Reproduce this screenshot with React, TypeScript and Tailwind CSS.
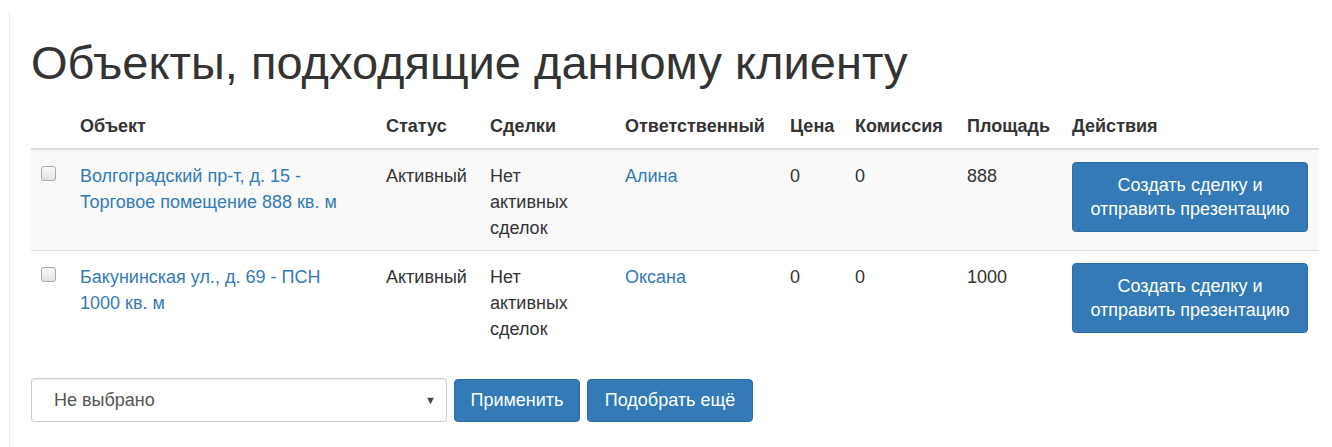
import React from "react";

const rows = [
  {
    obj: "Волгоградский пр-т, д. 15 - Торговое помещение 888 кв. м",
    status: "Активный",
    resp: "Алина",
    area: "888",
    striped: true,
  },
  {
    obj: "Бакунинская ул., д. 69 - ПСН 1000 кв. м",
    status: "Активный",
    resp: "Оксана",
    area: "1000",
    striped: false,
  },
];

export default function App() {
  return (
    <div
      className="w-[1332px] h-[447px] bg-white overflow-hidden text-[#333]"
      style={{ fontFamily: '"Liberation Sans", Arial, sans-serif' }}
    >
      <div className="ml-[9px] mt-[11px] h-[436px] border-l border-[#eef0f0] pl-[21px] pr-[14px]">
        <h1 className="text-[47px] leading-[56px] font-normal text-[#333] pt-[24px] mb-[18px]">
          Объекты, подходящие данному клиенту
        </h1>
        <table className="w-[1288px] table-fixed border-collapse text-[18px] leading-[26px]">
          <colgroup>
            <col className="w-[39px]" />
            <col className="w-[306px]" />
            <col className="w-[104px]" />
            <col className="w-[135px]" />
            <col className="w-[165px]" />
            <col className="w-[65px]" />
            <col className="w-[112px]" />
            <col className="w-[105px]" />
            <col className="w-[257px]" />
          </colgroup>
          <thead>
            <tr className="border-b-2 border-[#ddd] text-left text-[18px]">
              <th className="px-[10px] pt-[4px] pb-[9px]"></th>
              {["Объект", "Статус", "Сделки", "Ответственный", "Цена", "Комиссия", "Площадь", "Действия"].map(
                (h) => (
                  <th key={h} className="pl-[10px] pr-0 pt-[4px] pb-[9px] font-bold whitespace-nowrap">
                    {h}
                  </th>
                )
              )}
            </tr>
          </thead>
          <tbody>
            {rows.map((r, i) => (
              <tr
                key={i}
                className={
                  (r.striped ? "bg-[#f9f9f9] " : "") +
                  (i < rows.length - 1 ? "border-b border-[#ddd] " : "") +
                  "align-top"
                }
              >
                <td className="px-[10px] pt-[13px] pb-[9px]">
                  <div className="mt-[3px] w-[15px] h-[15px] rounded-[3px] border border-[#a9a9a9] bg-gradient-to-b from-[#fafafa] to-[#e2e2e2]" />
                </td>
                <td className="pl-[10px] pr-[16px] pt-[13px] pb-[9px] text-[#337ab7]">{r.obj}</td>
                <td className="pl-[10px] pr-0 pt-[13px] pb-[9px] whitespace-nowrap">{r.status}</td>
                <td className="px-[10px] pt-[13px] pb-[9px]">
                  Нет
                  <br />
                  активных
                  <br />
                  сделок
                </td>
                <td className="px-[10px] pt-[13px] pb-[9px] text-[#337ab7]">{r.resp}</td>
                <td className="px-[10px] pt-[13px] pb-[9px]">0</td>
                <td className="px-[10px] pt-[13px] pb-[9px]">0</td>
                <td className="px-[10px] pt-[13px] pb-[9px]">{r.area}</td>
                <td className="px-[10px] pt-[13px] pb-[9px]">
                  <button className="-mt-[1px] block w-[236px] h-[70px] rounded-[4px] bg-[#337ab7] border border-[#2e6da4] text-white text-[18px] leading-[24px]">
                    Создать сделку и
                    <br />
                    отправить презентацию
                  </button>
                </td>
              </tr>
            ))}
          </tbody>
        </table>
        <div className="flex items-center gap-[7px] mt-[27px]">
          <div className="relative w-[416px] h-[44px] rounded-[4px] border border-[#ccc] bg-white flex items-center pl-[22px] text-[18px] text-[#555] shadow-[inset_0_1px_1px_rgba(0,0,0,0.075)]">
            Не выбрано
            <span className="absolute right-[10px] top-[13px] text-[11px] text-[#444]">▼</span>
          </div>
          <button className="h-[43px] w-[126px] rounded-[4px] bg-[#337ab7] border border-[#2e6da4] text-white text-[18px]">
            Применить
          </button>
          <button className="h-[43px] w-[166px] rounded-[4px] bg-[#337ab7] border border-[#2e6da4] text-white text-[18px]">
            Подобрать ещё
          </button>
        </div>
      </div>
    </div>
  );
}
